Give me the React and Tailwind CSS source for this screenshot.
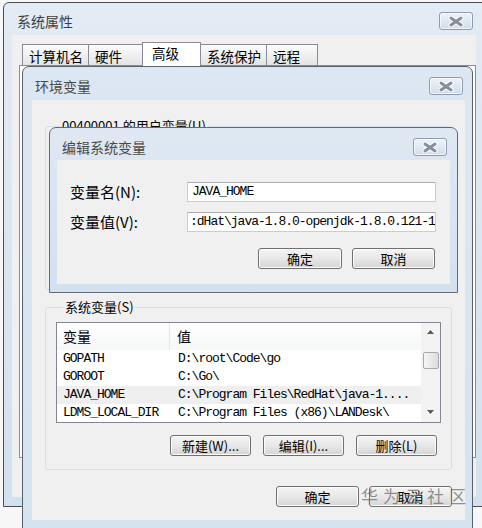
import React from 'react';

const cjk = "font-['Noto_Sans_CJK_SC',sans-serif]";
const mono = "font-['Liberation_Mono','Noto_Sans_CJK_SC',monospace]";

// inactive win7-basic close button
function CloseBtn() {
  return (
    <div className="w-[34px] h-[18px] rounded-[3px] border border-[#8e9db1] bg-gradient-to-b from-[#eef3f9] to-[#d2ddea] shadow-[inset_0_0_0_1px_rgba(255,255,255,0.7)] flex items-center justify-center">
      <svg width="16" height="11" viewBox="0 0 16 11">
        <path d="M3 2 L13 9 M13 2 L3 9" stroke="#ffffff" strokeWidth="5" strokeLinecap="round" />
        <path d="M3 2 L13 9 M13 2 L3 9" stroke="#878f9b" strokeWidth="3" strokeLinecap="round" />
      </svg>
    </div>
  );
}

function Btn({ children, w }) {
  return (
    <div
      className={`${w} h-[21px] rounded-[3px] border border-[#707070] bg-gradient-to-b from-[#f4f4f4] via-[#e8e8e8] to-[#d4d4d4] shadow-[inset_0_0_0_1px_#fbfbfb] flex items-center justify-center text-[13px] text-black ${cjk}`}
    >
      {children}
    </div>
  );
}

const tabs = [
  { label: '计算机名', w: 'w-[67px]' },
  { label: '硬件', w: 'w-[55px]' },
  { label: '高级', w: 'w-[59px]', active: true },
  { label: '系统保护', w: 'w-[67px]' },
  { label: '远程', w: 'w-[52px]' },
];

const rows = [
  ['GOPATH', 'D:\\root\\Code\\go'],
  ['GOROOT', 'C:\\Go\\'],
  ['JAVA_HOME', 'C:\\Program Files\\RedHat\\java-1....', true],
  ['LDMS_LOCAL_DIR', 'C:\\Program Files (x86)\\LANDesk\\'],
];

export default function App() {
  return (
    <div className={`relative w-[482px] h-[528px] overflow-hidden bg-[#f7f7f7] ${cjk}`}>
      {/* 系统属性 (behind) */}
      <div className="absolute left-[3px] top-[2px] w-[484px] h-[505px] rounded-tl-[6px] border border-[#4b4f55] bg-gradient-to-b from-[#e3ebf4] to-[#d3e0ee] flex flex-col">
        <div className="h-[32px] flex items-center justify-between pt-[4px] pl-[13px] pr-[13px]">
          <span className="text-[14px] text-[#3d3d3d]">系统属性</span>
          <CloseBtn />
        </div>
        <div className="ml-[8px] mr-[10px] h-[462px] bg-[#f0f0f0] flex flex-col">
          <div className="flex items-end h-[30px] pl-[10px]">
            {tabs.map((t, i) => (
              <div
                key={t.label}
                className={`${t.w} ${i > 0 ? '-ml-px' : ''} ${
                  t.active
                    ? 'h-[24px] bg-white z-10 -mb-px pt-[1px] pl-[9px]'
                    : 'h-[21px] bg-gradient-to-b from-[#fcfcfc] to-[#e4e4e4] pt-[2px] pl-[6px]'
                } border border-b-0 border-[#898c95] text-[13.5px] leading-[18px] text-black`}
              >
                {t.label}
              </div>
            ))}
          </div>
          <div className="ml-[7px] h-[393px] border border-[#898c95] bg-white" />
        </div>
      </div>

      {/* 环境变量 */}
      <div className="absolute left-[22px] top-[66px] w-[451px] h-[472px] rounded-t-[7px] border border-[#59616c] bg-gradient-to-b from-[#dde7f2] to-[#d5e2f0] flex flex-col">
        <div className="h-[33px] flex items-center justify-between pt-[5px] pl-[12px] pr-[9px]">
          <span className="text-[14px] text-[#4a4a4a]">环境变量</span>
          <CloseBtn />
        </div>
        <div className="ml-[9px] mr-[7px] h-[420px] bg-[#f0f0f0] flex flex-col">
          <fieldset className="mt-[18px] mx-[13px] h-[172px] border border-[#d5dfe5] rounded-[3px]">
            <legend className="ml-[14px] px-[2px] text-[13px] leading-[16px] text-black">
              00400001 的用户变量(U)
            </legend>
          </fieldset>

          <fieldset className="mt-[9px] mx-[13px] border border-[#d5dfe5] rounded-[3px] px-[10px] pb-[13px]">
            <legend className="ml-[7px] px-[2px] text-[13px] leading-[16px] text-black">系统变量(S)</legend>
            <div className="mt-[7px] h-[101px] border border-[#828790] bg-white flex overflow-hidden">
              <div className="flex-1 flex flex-col">
                <div className="h-[29px] flex bg-gradient-to-b from-white to-[#f6f7f8] text-[14px] text-black">
                  <div className="w-[113px] pl-[6px] flex items-center border-r border-[#e3e5e8]">变量</div>
                  <div className="flex-1 pl-[7px] flex items-center">值</div>
                </div>
                {rows.map(([name, value, sel]) => (
                  <div
                    key={name}
                    className={`h-[18px] shrink-0 flex items-center text-[13px] tracking-[-1px] text-black ${mono} ${
                      sel ? 'bg-[#efefef]' : ''
                    }`}
                  >
                    <div className="w-[113px] pl-[6px] whitespace-nowrap overflow-hidden">{name}</div>
                    <div className="flex-1 pl-[8px] whitespace-nowrap overflow-hidden">{value}</div>
                  </div>
                ))}
              </div>
              <div className="w-[19px] bg-[#f3f3f3] flex flex-col items-center">
                <div className="h-[18px] flex items-center justify-center">
                  <svg width="7" height="4" viewBox="0 0 7 4">
                    <path d="M0 4 L3.5 0 L7 4 Z" fill="#5a5a5a" />
                  </svg>
                </div>
                <div className="mt-[11px] w-[16px] h-[17px] rounded-[2px] border border-[#a9a9a9] bg-gradient-to-r from-[#f6f6f6] to-[#dcdcdc]" />
                <div className="flex-1" />
                <div className="h-[20px] flex items-center justify-center">
                  <svg width="7" height="4" viewBox="0 0 7 4">
                    <path d="M0 0 L7 0 L3.5 4 Z" fill="#5a5a5a" />
                  </svg>
                </div>
              </div>
            </div>
            <div className="mt-[12px] flex justify-end gap-[12px] pr-[4px]">
              <Btn w="w-[81px]">新建(W)...</Btn>
              <Btn w="w-[81px]">编辑(I)...</Btn>
              <Btn w="w-[81px]">删除(L)</Btn>
            </div>
          </fieldset>

          <div className="mt-[16px] flex justify-end gap-[10px] pr-[13px]">
            <Btn w="w-[83px]">确定</Btn>
            <Btn w="w-[83px]">取消</Btn>
          </div>
        </div>
      </div>

      {/* 编辑系统变量 */}
      <div className="absolute left-[49px] top-[127px] w-[409px] h-[166px] rounded-t-[7px] border border-[#626a75] bg-gradient-to-b from-[#dfe8f3] to-[#d3e0ee] flex flex-col">
        <div className="h-[32px] flex items-center justify-between pt-[6px] pl-[12px] pr-[10px]">
          <span className="text-[14px] text-[#4a4a4a]">编辑系统变量</span>
          <CloseBtn />
        </div>
        <div className="ml-[7px] mr-[7px] h-[124px] bg-[#f0f0f0] flex flex-col pt-[22px] pl-[13px] pr-[14px]">
          <div className="flex items-center h-[20px]">
            <div className="w-[117px] text-[15px] text-black">变量名(N):</div>
            <div className={`flex-1 h-[20px] border border-[#c9ccd2] border-t-[#abadb3] bg-white pl-[4px] flex items-center text-[13px] tracking-[-1px] text-black ${mono}`}>
              JAVA_HOME
            </div>
          </div>
          <div className="flex items-center h-[20px] mt-[10px]">
            <div className="w-[117px] text-[15px] text-black">变量值(V):</div>
            <div className={`flex-1 h-[20px] border border-[#c9ccd2] border-t-[#abadb3] bg-white pl-[2px] flex items-center overflow-hidden whitespace-nowrap text-[13px] tracking-[-1px] text-black ${mono}`}>
              :dHat\java-1.8.0-openjdk-1.8.0.121-1
            </div>
          </div>
          <div className="mt-[16px] flex justify-end gap-[10px] pr-[1px]">
            <Btn w="w-[84px]">确定</Btn>
            <Btn w="w-[83px]">取消</Btn>
          </div>
        </div>
      </div>

      {/* watermark */}
      <div className="absolute left-[361px] top-[483px] text-[17px] tracking-[5px] text-[rgba(110,110,110,0.75)] pointer-events-none">
        华为云社区
      </div>
    </div>
  );
}
